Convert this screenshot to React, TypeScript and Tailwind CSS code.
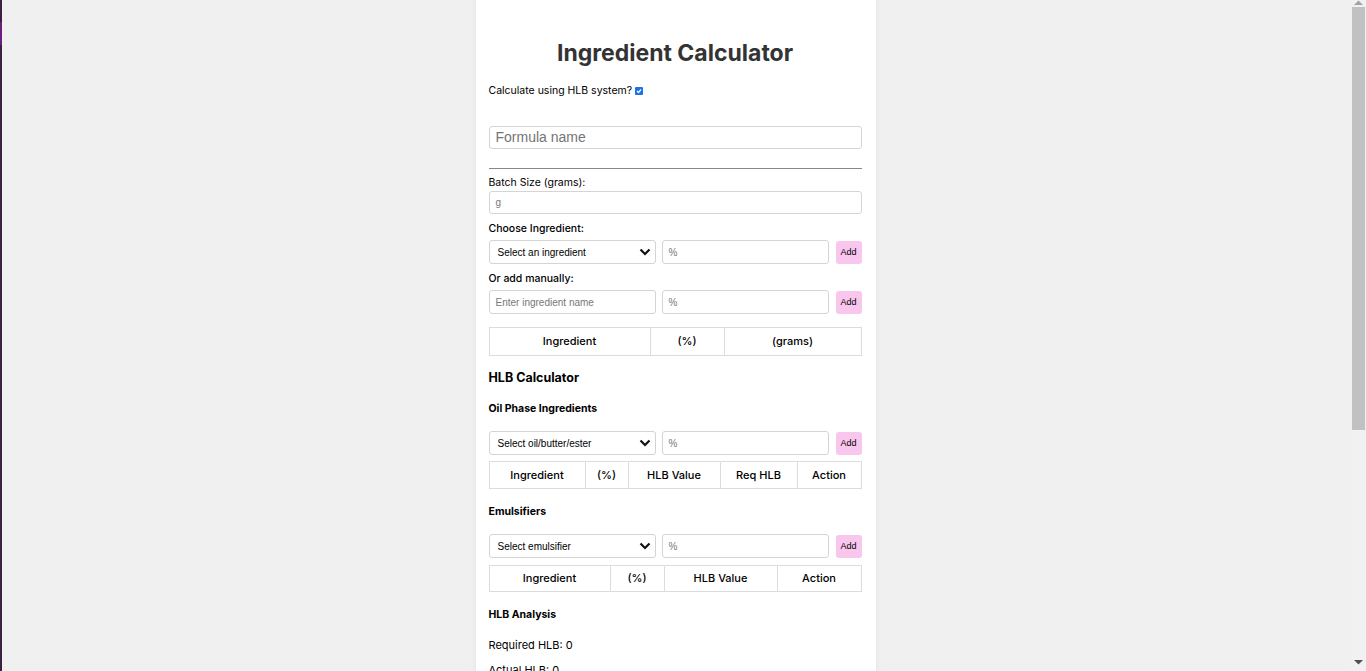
import React from "react";

const font = "font-['Inter','Noto_Sans',sans-serif]";
const arial = "font-['Liberation_Sans',Arial,sans-serif]";

function Chevron() {
  return (
    <svg width="12" height="8" viewBox="0 0 12 8" className="shrink-0">
      <path d="M1.5 1.5 L6 6 L10.5 1.5" fill="none" stroke="#111" strokeWidth="2.2" />
    </svg>
  );
}

function SelectBox({ label }: { label: string }) {
  return (
    <div
      className={`flex h-[24px] w-[167px] items-center justify-between rounded-[3px] border border-[#d4d4d4] bg-white pl-[8px] pr-[4px] text-[10px] text-black ${arial}`}
    >
      <span>{label}</span>
      <Chevron />
    </div>
  );
}

function TextBox({ placeholder, w = "w-[167px]", h = "h-[24px]" }: { placeholder: string; w?: string; h?: string }) {
  return (
    <div
      className={`flex ${h} ${w} items-center rounded-[3px] border border-[#d4d4d4] bg-white pl-[6px] text-[10px] text-[#777] ${arial}`}
    >
      {placeholder}
    </div>
  );
}

function AddButton() {
  return (
    <div
      className={`flex h-[23px] w-[26px] items-center justify-center rounded-[3px] bg-[#f9c6ee] pt-[1px] text-[9px] text-black ${arial}`}
    >
      Add
    </div>
  );
}

function Row({ first }: { first: React.ReactNode }) {
  return (
    <div className="flex items-center gap-[6px]">
      {first}
      <TextBox placeholder="%" />
      <div className="ml-[1px]">
        <AddButton />
      </div>
    </div>
  );
}

function HeadTable({ cols, h = "h-[27px]" }: { cols: { label: string; w: string }[]; h?: string }) {
  return (
    <div className="flex border border-[#dcdcdc] bg-white">
      {cols.map((c, i) => (
        <div
          key={c.label}
          className={`flex ${h} items-center justify-center text-[11px] font-medium text-black ${c.w} ${
            i > 0 ? "border-l border-[#dcdcdc]" : ""
          }`}
        >
          {c.label}
        </div>
      ))}
    </div>
  );
}

function FakeScrollbar() {
  return (
    <div className="fixed right-0 top-0 flex h-screen w-[15px] flex-col items-center bg-[#f1f1f1]">
      <svg width="9" height="5" viewBox="0 0 9 5" className="shrink-0">
        <path d="M0 5 L4.5 0.5 L9 5 Z" fill="#a3a3a3" />
      </svg>
      <div className="mt-[2px] h-[423px] w-[13px] bg-[#c1c1c1]" />
      <div className="flex-1" />
      <svg width="9" height="5" viewBox="0 0 9 5" className="mb-[6px] shrink-0">
        <path d="M0 0 L9 0 L4.5 4.5 Z" fill="#505050" />
      </svg>
    </div>
  );
}

export default function App() {
  return (
    <div className={`min-h-screen bg-[#f0f0f0] pr-[15px] ${font}`}>
      <div className="fixed left-0 top-0 flex h-screen w-[2px] flex-col bg-[#3a2140]">
        <div className="mt-[22px] h-[23px] bg-[#6b1f7c]" />
      </div>
      <div className="flex justify-center">
        <div className="min-h-[1050px] w-[400px] bg-white pl-[13px] pr-[14px] pt-[38px] shadow-[0_0_6px_rgba(0,0,0,0.06)]">
          <h1 className="text-center text-[23px] font-bold leading-[30px] text-[#333]">
            Ingredient Calculator
          </h1>

          <div className="mt-[15px] flex h-[16px] items-center gap-[3px] text-[10.5px] leading-[16px] text-black">
            <span>Calculate using HLB system?</span>
            <span className="flex h-[8px] w-[8px] items-center justify-center rounded-[1px] bg-[#1a73e8]">
              <svg width="6" height="6" viewBox="0 0 6 6">
                <path d="M1 3 L2.5 4.5 L5 1.5" fill="none" stroke="white" strokeWidth="1.2" />
              </svg>
            </span>
          </div>

          <div
            className={`mt-[27px] flex h-[23px] items-center rounded-[3px] border border-[#d4d4d4] pl-[6px] text-[14px] text-[#757575] ${arial}`}
          >
            Formula name
          </div>

          <div className="mt-[19px] h-[1px] bg-[#888]" />

          <div className="mt-[7px] text-[10.5px] leading-[14px] text-black">Batch Size (grams):</div>
          <div className="mt-[1px]">
            <TextBox placeholder="g" w="w-full" h="h-[23px]" />
          </div>

          <div className="mt-[8px] text-[10.5px] font-medium leading-[14px] text-black">Choose Ingredient:</div>
          <div className="mt-[4px]">
            <Row first={<SelectBox label="Select an ingredient" />} />
          </div>

          <div className="mt-[8px] text-[10.5px] font-medium leading-[14px] text-black">Or add manually:</div>
          <div className="mt-[4px]">
            <Row first={<TextBox placeholder="Enter ingredient name" />} />
          </div>

          <div className="mt-[13px]">
            <HeadTable
              h="h-[27px]"
              cols={[
                { label: "Ingredient", w: "w-[160px]" },
                { label: "(%)", w: "w-[74px]" },
                { label: "(grams)", w: "flex-1" },
              ]}
            />
          </div>

          <h2 className="mt-[14px] text-[12.5px] font-bold leading-[16px] text-black">HLB Calculator</h2>
          <h3 className="mt-[16px] text-[10.5px] font-bold leading-[14px] text-black">Oil Phase Ingredients</h3>

          <div className="mt-[15px]">
            <Row first={<SelectBox label="Select oil/butter/ester" />} />
          </div>
          <div className="mt-[6px]">
            <HeadTable
              h="h-[26px]"
              cols={[
                { label: "Ingredient", w: "w-[95px]" },
                { label: "(%)", w: "w-[43px]" },
                { label: "HLB Value", w: "w-[92px]" },
                { label: "Req HLB", w: "w-[77px]" },
                { label: "Action", w: "flex-1" },
              ]}
            />
          </div>

          <h3 className="mt-[16px] text-[10.5px] font-bold leading-[14px] text-black">Emulsifiers</h3>
          <div className="mt-[15px]">
            <Row first={<SelectBox label="Select emulsifier" />} />
          </div>
          <div className="mt-[7px]">
            <HeadTable
              h="h-[25px]"
              cols={[
                { label: "Ingredient", w: "w-[120px]" },
                { label: "(%)", w: "w-[54px]" },
                { label: "HLB Value", w: "w-[113px]" },
                { label: "Action", w: "flex-1" },
              ]}
            />
          </div>

          <h3 className="mt-[16px] text-[10.5px] font-bold leading-[14px] text-black">HLB Analysis</h3>
          <p className="mt-[16px] text-[11px] leading-[14px] text-black">Required HLB: 0</p>
          <p className="mt-[11px] text-[11px] leading-[14px] text-black">Actual HLB: 0</p>
        </div>
      </div>
      <FakeScrollbar />
    </div>
  );
}
